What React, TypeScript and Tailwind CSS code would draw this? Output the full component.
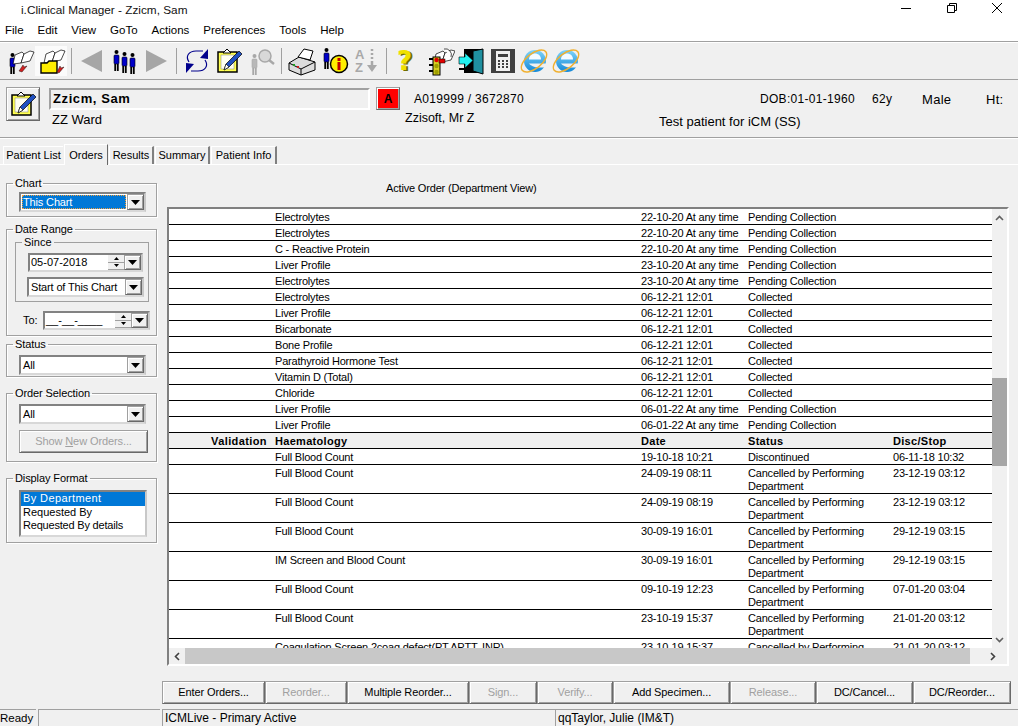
import type { ReactNode } from "react";

const raised =
  "border border-[#a0a0a0] border-r-[#696969] border-b-[#696969] shadow-[inset_1px_1px_0_#ffffff,inset_-1px_-1px_0_#a0a0a0]";
const sunken = "border-2 border-[#828282] border-r-[#c8c8c8] border-b-[#d8d8d8]";

const pendingRows = [
  ["Electrolytes", "22-10-20 At any time", "Pending Collection"],
  ["Electrolytes", "22-10-20 At any time", "Pending Collection"],
  ["C - Reactive Protein", "22-10-20 At any time", "Pending Collection"],
  ["Liver Profile", "23-10-20 At any time", "Pending Collection"],
  ["Electrolytes", "23-10-20 At any time", "Pending Collection"],
  ["Electrolytes", "06-12-21 12:01", "Collected"],
  ["Liver Profile", "06-12-21 12:01", "Collected"],
  ["Bicarbonate", "06-12-21 12:01", "Collected"],
  ["Bone Profile", "06-12-21 12:01", "Collected"],
  ["Parathyroid Hormone Test", "06-12-21 12:01", "Collected"],
  ["Vitamin D (Total)", "06-12-21 12:01", "Collected"],
  ["Chloride", "06-12-21 12:01", "Collected"],
  ["Liver Profile", "06-01-22 At any time", "Pending Collection"],
  ["Liver Profile", "06-01-22 At any time", "Pending Collection"],
];

const cancelled = "Cancelled by Performing Department";
const haemRows = [
  ["Full Blood Count", "19-10-18 10:21", "Discontinued", "06-11-18 10:32"],
  ["Full Blood Count", "24-09-19 08:11", cancelled, "23-12-19 03:12"],
  ["Full Blood Count", "24-09-19 08:19", cancelled, "23-12-19 03:12"],
  ["Full Blood Count", "30-09-19 16:01", cancelled, "29-12-19 03:15"],
  ["IM Screen and Blood Count", "30-09-19 16:01", cancelled, "29-12-19 03:15"],
  ["Full Blood Count", "09-10-19 12:23", cancelled, "07-01-20 03:04"],
  ["Full Blood Count", "23-10-19 15:37", cancelled, "21-01-20 03:12"],
  ["Coagulation Screen 2coag defect(PT,APTT, INR)", "23-10-19 15:37", cancelled, "21-01-20 03:12"],
];

const actions = [
  { label: "Enter Orders...", w: "w-[103px]" },
  { label: "Reorder...", w: "w-[82px]", off: true },
  { label: "Multiple Reorder...", w: "w-[122px]" },
  { label: "Sign...", w: "w-[68px]", off: true },
  { label: "Verify...", w: "w-[76px]", off: true },
  { label: "Add Specimen...", w: "w-[117px]" },
  { label: "Release...", w: "w-[86px]", off: true },
  { label: "DC/Cancel...", w: "w-[97px]" },
  { label: "DC/Reorder...", w: "w-[98px]" },
];

const Person = ({ x, y, c = "#0000c8", s = "#000" }: { x: number; y: number; c?: string; s?: string }) => (
  <g>
    <circle cx={x + 2.5} cy={y + 2} r="2" fill={s} />
    <rect x={x} y={y + 5} width="5" height="9" rx="1" fill={c} stroke={s} strokeWidth="0.6" />
    <rect x={x + 0.3} y={y + 14} width="1.8" height="7" fill={s} />
    <rect x={x + 2.9} y={y + 14} width="1.8" height="7" fill={s} />
  </g>
);

const Book = ({ x, y, s = "#000" }: { x: number; y: number; s?: string }) => (
  <g fill="#fff" stroke={s} strokeWidth="0.7">
    <path d={`M${x} ${y + 4}l7-3 2 2 -3 9 -8 1z`} />
    <path d={`M${x + 9} ${y + 3}l6-3 4 1 -4 9 -9 2z`} />
  </g>
);

const Icon = ({ children, w = 32, h = 32 }: { children: ReactNode; w?: number; h?: number }) => (
  <svg width={w} height={h} viewBox={`0 0 ${w} ${h}`}>{children}</svg>
);

const ClipboardIcon = () => (
  <Icon>
    <rect x="5" y="7" width="19" height="20" fill="#ffff50" stroke="#000" strokeWidth="1.5" />
    <rect x="8" y="10" width="13" height="14" fill="#fffff0" stroke="#808080" strokeWidth="0.5" />
    <path d="M10 8l4-4 4 4z" fill="#fff" stroke="#000" />
    <path d="M11 25l2-6 13-13 3 3-13 13z" fill="#2050c0" stroke="#000" strokeWidth="0.7" />
    <path d="M13 19l3 3-5 3z" fill="#fff" stroke="#000" strokeWidth="0.6" />
  </Icon>
);

const IeIcon = () => (
  <Icon>
    <defs>
      <linearGradient id="ieBlue" x1="0" y1="0" x2="0" y2="1">
        <stop offset="0" stopColor="#7fd4f8" />
        <stop offset="1" stopColor="#1488d8" />
      </linearGradient>
    </defs>
    <circle cx="16" cy="16" r="11" fill="url(#ieBlue)" />
    <path d="M10 14.5c0-8 12-8 12 0z" fill="#f4fbff" />
    <path d="M10 18.5h19v4h-8c-4 0-8-.5-11-4z" fill="#f0f0f0" />
    <ellipse cx="15" cy="16" rx="15" ry="7.5" fill="none" stroke="#f0b030" strokeWidth="1.4" transform="rotate(-38 15 16)" />
  </Icon>
);

const toolbar: (ReactNode | "sep")[] = [
  <Icon key="a">
    <Person x={7} y={8} />
    <Book x={12} y={6} />
    <path d="M16 26l4-6 1 2 3-1-5 6z" fill="#d02020" stroke="#000" strokeWidth="0.4" />
  </Icon>,
  <Icon key="b">
    <Book x={11} y={5} />
    <path d="M6 18h6l2-2h8v12H6z" fill="#ffee00" stroke="#000" strokeWidth="1.4" />
    <path d="M22 27l3-6 1 2 3-1-5 6z" fill="#d02020" stroke="#000" strokeWidth="0.4" />
  </Icon>,
  "sep",
  <Icon key="c"><path d="M5 16L26 5v22z" fill="#a6a6a6" /></Icon>,
  <Icon key="d">
    <Person x={6} y={5} />
    <Person x={14} y={7} />
    <Person x={22} y={8} />
  </Icon>,
  <Icon key="e"><path d="M27 16L6 5v22z" fill="#a6a6a6" /></Icon>,
  "sep",
  <Icon key="f">
    <path d="M8 17c-4-6 0-11 7-11h7" fill="none" stroke="#00008c" strokeWidth="1.2" />
    <path d="M24 15c4 6 0 11-7 11h-7" fill="none" stroke="#00008c" strokeWidth="1.2" />
    <path d="M27 4v10l-8-1z" fill="#00008c" />
    <path d="M5 28V18l8 1z" fill="#00008c" />
  </Icon>,
  <ClipboardIcon key="g" />,
  <Icon key="h">
    <Person x={7} y={9} c="#b8b8b8" s="#a8a8a8" />
    <circle cx="20" cy="11" r="6" fill="#d8d8d8" stroke="#a8a8a8" strokeWidth="1.5" />
    <path d="M24 15l5 4" stroke="#a8a8a8" strokeWidth="2.5" />
  </Icon>,
  "sep",
  <Icon key="i">
    <path d="M3 18l10-6 16 5v8l-14 5-12-5z" fill="#dcdcdc" stroke="#000" />
    <path d="M3 18l12 6 14-7M15 24v6" fill="none" stroke="#000" />
    <path d="M12 12l6-8 9 2-3 9z" fill="#fff" stroke="#000" />
    <rect x="7" y="19" width="2" height="2" fill="#20a020" />
    <rect x="11" y="21" width="2" height="2" fill="#d02020" />
  </Icon>,
  <Icon key="j">
    <Person x={6} y={3} />
    <circle cx="21" cy="19" r="8.5" fill="#ffee00" stroke="#000" strokeWidth="1.5" />
    <rect x="19.5" y="13" width="3" height="3" fill="#c00000" />
    <rect x="19.5" y="17" width="3" height="8" fill="#c00000" />
  </Icon>,
  <Icon key="k">
    <text x="5" y="14" fontSize="13" fontWeight="700" fill="#a8a8a8" fontFamily="Liberation Sans">A</text>
    <text x="5" y="27" fontSize="13" fontWeight="700" fill="#a8a8a8" fontFamily="Liberation Sans">Z</text>
    <path d="M22 4v2M22 8v2M22 12v2M22 16v6" stroke="#a8a8a8" strokeWidth="2.5" />
    <path d="M17 20h10l-5 7z" fill="#a8a8a8" />
  </Icon>,
  "sep",
  <Icon key="l">
    <text x="8" y="25.5" fontSize="26" fontWeight="700" fill="#707000" fontFamily="DejaVu Sans">?</text>
    <text x="6" y="24.5" fontSize="26" fontWeight="700" fill="#f0e000" fontFamily="DejaVu Sans">?</text>
  </Icon>,
  <Icon key="m">
    <Book x={13} y={5} />
    <path d="M21 4a6 6 0 0 1 7 8" fill="#fff" stroke="#000" strokeWidth="0.7" />
    <rect x="10" y="12" width="7" height="18" fill="#d8d020" stroke="#000" />
    <circle cx="13.5" cy="15" r="2.2" fill="#e00000" />
    <circle cx="13.5" cy="21" r="2.2" fill="#a0a000" />
    <circle cx="13.5" cy="27" r="2.2" fill="#a0a000" />
    <rect x="6" y="13" width="4" height="2" fill="#000" />
    <rect x="6" y="19" width="4" height="2" fill="#000" />
    <rect x="6" y="25" width="4" height="2" fill="#000" />
    <rect x="16" y="14" width="6" height="4" fill="#e00000" stroke="#000" strokeWidth="0.5" />
  </Icon>,
  <Icon key="n">
    <path d="M9 4h19v24H9z" fill="#000" />
    <path d="M18 6l10-2v25l-10-3z" fill="#2090a0" stroke="#000" />
    <rect x="4" y="23" width="12" height="2" fill="#000" />
    <path d="M4 12h6V8l8 7.5-8 7.5v-4H4z" fill="#20f0f0" stroke="#000" strokeWidth="0.6" />
  </Icon>,
  <Icon key="o">
    <rect x="4" y="4" width="24" height="24" fill="#404040" />
    <rect x="9" y="6" width="14" height="20" fill="#f0f0f0" />
    <rect x="11" y="9" width="10" height="3" fill="#404040" />
    {[11, 15, 19].map((x) =>
      [15, 18, 21].map((y) => <rect key={`${x}${y}`} x={x} y={y} width="2" height="2" fill="#404040" />)
    )}
  </Icon>,
  <IeIcon key="p" />,
  <IeIcon key="q" />,
];

const Arrow = () => (
  <svg width="9" height="5" viewBox="0 0 9 5"><path d="M0 0h9L4.5 5z" fill="#000" /></svg>
);

const Drop = () => (
  <div className={`flex w-[17px] shrink-0 items-center justify-center self-stretch bg-[#f0f0f0] ${raised}`}>
    <Arrow />
  </div>
);

const Combo = ({ value, className, selected }: { value: string; className: string; selected?: boolean }) => (
  <div className={`flex bg-white text-[11px] tracking-[-0.15px] ${sunken} ${className}`}>
    <div className="min-w-0 flex-1 p-px">
      <div
        className={
          selected
            ? "h-full whitespace-nowrap border border-dotted border-[#f0a040] bg-[#0078d7] leading-[13px] text-white"
            : "whitespace-nowrap pl-[1px] leading-[14px]"
        }
      >
        {value}
      </div>
    </div>
    <Drop />
  </div>
);

const Spin = () => (
  <div className="flex w-[16px] shrink-0 flex-col">
    <div className="flex h-1/2 items-center justify-center border-b border-[#a0a0a0] bg-[#f0f0f0]">
      <svg width="5" height="3" viewBox="0 0 5 3"><path d="M0 3h5L2.5 0z" fill="#000" /></svg>
    </div>
    <div className="flex h-1/2 items-center justify-center border-b border-[#a0a0a0] bg-[#f0f0f0]">
      <svg width="5" height="3" viewBox="0 0 5 3"><path d="M0 0h5L2.5 3z" fill="#000" /></svg>
    </div>
  </div>
);

const Group = ({ title, className, children }: { title: string; className: string; children: ReactNode }) => (
  <fieldset className={`w-[151px] border border-[#a0a0a0] shadow-[inset_1px_1px_0_#ffffff,1px_1px_0_#ffffff] ${className}`}>
    <legend className="ml-[6px] px-[2px] text-[11px] leading-[12px] tracking-[-0.1px]">{title}</legend>
    {children}
  </fieldset>
);

const Tab = ({ label, active, plain, w }: { label: string; active?: boolean; plain?: boolean; w: string }) => (
  <div
    className={
      active
        ? `${w} z-10 -mb-px flex h-[21px] items-start justify-center border border-b-0 border-white border-r-[#696969] bg-[#f0f0f0] pt-[2px]`
        : `${w} flex h-[18px] items-center justify-center border-t border-l border-white bg-[#f0f0f0] ${plain ? "" : "border-r-2 border-r-[#808080]"}`
    }
  >
    {label}
  </div>
);

const Cell = ({ children, bold }: { children?: ReactNode; bold?: boolean }) => (
  <div className={bold ? "font-bold tracking-[0.3px]" : ""}>{children}</div>
);

const rowClass =
  "grid grid-cols-[106px_366px_107px_145px_1fr] border-b border-black pt-[2px] text-[11px] leading-[13px] tracking-[-0.2px] text-black";

export default function App() {
  return (
    <div
      className="flex h-[726px] w-[1018px] flex-col overflow-hidden bg-[#f0f0f0] text-[12px] text-black"
      style={{ fontFamily: '"Liberation Sans", Arial, sans-serif' }}
    >
      {/* title and menu */}
      <div className="h-[41px] shrink-0 bg-white">
        <div className="flex h-[21px] items-start pl-[21px]">
          <span className="mt-[3px] flex-1 text-[11.8px] leading-[14px] text-[#111]">i.Clinical Manager - Zzicm, Sam</span>
          <svg width="104" height="16" viewBox="0 0 104 16" className="mr-[14px]" fill="none" stroke="#000">
            <path d="M1 8.5h10" />
            <path d="M47.5 5.5h7v7h-7zM49.5 5.5v-2h7v7h-2" />
            <path d="M92 3l10 10M102 3l-10 10" />
          </svg>
        </div>
        <div className="flex h-[20px] items-center gap-[14px] pl-[5px] text-[11.5px]">
          {["File", "Edit", "View", "GoTo", "Actions", "Preferences", "Tools", "Help"].map((m) => (
            <span key={m}>{m}</span>
          ))}
        </div>
      </div>

      {/* toolbar */}
      <div className="flex h-[39px] shrink-0 items-center border-y border-y-[#a0a0a0] pl-[3px] shadow-[inset_0_1px_0_#ffffff]">
        {toolbar.map((t, i) =>
          t === "sep" ? (
            <div key={i} className="mx-[4px] h-[26px] w-[1px] bg-[#a0a0a0]" />
          ) : (
            <div
              key={i}
              className={
                i === 1
                  ? "flex h-[30px] w-[32px] items-center justify-center bg-white/70"
                  : "flex h-[30px] w-[32px] items-center justify-center"
              }
            >
              {t}
            </div>
          )
        )}
      </div>

      {/* patient banner */}
      <div className="flex h-[58px] shrink-0 items-start border-b border-[#a0a0a0] pl-[6px] pt-[7px]">
        <div className={`flex h-[34px] w-[34px] shrink-0 items-center justify-center ${raised}`}>
          <ClipboardIcon />
        </div>
        <div className="ml-[9px] flex-1">
          <div className="flex h-[23px] items-center">
            <div className="flex h-[22px] w-[321px] items-center border-2 border-[#a0a0a0] border-r-white border-b-white pl-[2px] text-[13px] font-bold tracking-[0.6px]">
              Zzicm, Sam
            </div>
            <div className={`ml-[6px] flex h-[23px] w-[24px] items-center justify-center bg-[#ff0000] font-bold ${raised}`}>
              A
            </div>
            <div className="ml-[14px] w-[346px] tracking-[0.3px]">A019999 / 3672870</div>
            <div className="flex pt-[2px] tracking-[0.3px]">
              <span className="w-[112px]">DOB:01-01-1960</span>
              <span className="w-[50px]">62y</span>
              <span className="w-[64px] text-[13px]">Male</span>
              <span className="text-[13px]">Ht:</span>
            </div>
          </div>
          <div className="flex items-start pt-[1px]">
            <span className="w-[356px] pl-[3px] pt-[1px] text-[13px] leading-[15px]">ZZ Ward</span>
            <span className="w-[254px] text-[12.5px] leading-[15px]">Zzisoft, Mr Z</span>
            <span className="pt-[3px] text-[13px] leading-[15px]">Test patient for iCM (SS)</span>
          </div>
        </div>
      </div>

      {/* tabs */}
      <div className="flex h-[27px] shrink-0 items-end gap-px border-b border-white pl-[3px] text-[11px] shadow-[inset_0_1px_0_#ffffff]">
        <Tab label="Patient List" w="w-[60px]" plain />
        <Tab label="Orders" w="w-[44px]" active />
        <Tab label="Results" w="w-[45px]" />
        <Tab label="Summary" w="w-[55px]" />
        <Tab label="Patient Info" w="w-[66px]" />
      </div>

      {/* main */}
      <div className="flex min-h-0 flex-1">
        <div className="flex w-[167px] shrink-0 flex-col pl-[6px] pt-[12px] text-[11px]">
          <Group title="Chart" className="h-[40px]">
            <div className="pl-[12px] pt-[3px]">
              <Combo value="This Chart" selected className="h-[20px] w-[127px]" />
            </div>
          </Group>
          <Group title="Date Range" className="mt-[6px] h-[113px]">
            <div className="pl-[8px] pt-[1px]">
              <fieldset className="h-[66px] w-[134px] border border-[#a0a0a0]">
                <legend className="ml-[6px] px-[2px] leading-[12px]">Since</legend>
                <div className="pl-[12px] pt-[5px]">
                  <div className={`flex h-[19px] w-[115px] bg-white ${sunken}`}>
                    <div className="flex-1 pl-[1px] leading-[15px]">05-07-2018</div>
                    <Spin />
                    <Drop />
                  </div>
                  <Combo value="Start of This Chart" className="ml-[-1px] mt-[5px] h-[20px] w-[117px]" />
                </div>
              </fieldset>
              <div className="mt-[9px] flex items-center">
                <span className="w-[28px] pl-[8px]">To:</span>
                <div className={`flex h-[19px] w-[107px] bg-white ${sunken}`}>
                  <div className="flex-1 pl-[1px] leading-[15px]">__-__-____</div>
                  <Spin />
                  <Drop />
                </div>
              </div>
            </div>
          </Group>
          <Group title="Status" className="mt-[2px] h-[39px]">
            <div className="pl-[12px] pt-[5px]">
              <Combo value="All" className="h-[20px] w-[127px]" />
            </div>
          </Group>
          <Group title="Order Selection" className="mt-[10px] h-[75px]">
            <div className="pl-[12px] pt-[5px]">
              <Combo value="All" className="h-[20px] w-[127px]" />
              <div className={`mt-[6px] flex h-[23px] w-[129px] items-center justify-center tracking-[-0.1px] text-[#a0a0a0] ${raised}`}>
                <span>Show <span className="underline">N</span>ew Orders...</span>
              </div>
            </div>
          </Group>
          <Group title="Display Format" className="mt-[10px] h-[71px]">
            <div className="pl-[12px] pt-[6px]">
              <div className={`h-[47px] w-[128px] bg-white leading-[13px] ${sunken}`}>
                <div className="h-[14px] bg-[#0078d7] pl-[2px] tracking-[0.4px] text-white">By Department</div>
                <div className="pl-[2px]">Requested By</div>
                <div className="pl-[2px] tracking-[-0.2px]">Requested By details</div>
              </div>
            </div>
          </Group>
        </div>

        <div className="flex min-w-0 flex-1 flex-col">
          <div className="h-[42px] shrink-0 pl-[219px] pt-[17px] text-[11px] leading-[13px] tracking-[-0.17px]">
            Active Order (Department View)
          </div>
          <div className="flex h-[459px] w-[842px] shrink-0 flex-col border-2 border-[#808080] border-r-white border-b-white">
            <div className="flex min-h-0 flex-1">
              <div className="min-w-0 flex-1 overflow-hidden bg-white">
                {pendingRows.map((r, i) => (
                  <div key={i} className={rowClass}>
                    <div />
                    <Cell>{r[0]}</Cell>
                    <Cell>{r[1]}</Cell>
                    <Cell>{r[2]}</Cell>
                    <div />
                  </div>
                ))}
                <div className={`${rowClass} bg-[#f0f0f0]`}>
                  <div className="pr-[8px] text-right font-bold tracking-[0.4px]">Validation</div>
                  <Cell bold>Haematology</Cell>
                  <Cell bold>Date</Cell>
                  <Cell bold>Status</Cell>
                  <Cell bold>Disc/Stop</Cell>
                </div>
                {haemRows.map((r, i) => (
                  <div key={i} className={rowClass}>
                    <div />
                    <Cell>{r[0]}</Cell>
                    <Cell>{r[1]}</Cell>
                    <div className="w-[125px]">{r[2]}</div>
                    <Cell>{r[3]}</Cell>
                  </div>
                ))}
              </div>
              <div className="flex w-[15px] shrink-0 flex-col bg-[#f0f0f0]">
                <div className="flex h-[17px] items-center justify-center">
                  <svg width="9" height="6" viewBox="0 0 9 6" fill="none" stroke="#606060" strokeWidth="1.6"><path d="M1 5l3.5-3.5L8 5" /></svg>
                </div>
                <div className="mt-[152px] h-[88px] bg-[#a6a6a6]" />
                <div className="flex-1" />
                <div className="flex h-[17px] items-center justify-center">
                  <svg width="9" height="6" viewBox="0 0 9 6" fill="none" stroke="#606060" strokeWidth="1.6"><path d="M1 1l3.5 3.5L8 1" /></svg>
                </div>
              </div>
            </div>
            <div className="flex h-[16px] shrink-0 bg-[#f0f0f0]">
              <div className="flex w-[16px] items-center justify-center">
                <svg width="6" height="9" viewBox="0 0 6 9" fill="none" stroke="#404040" strokeWidth="1.6"><path d="M5 1L1.5 4.5 5 8" /></svg>
              </div>
              <div className="w-[785px] bg-[#c8c8c8]" />
              <div className="flex flex-1 items-center justify-center pl-[8px]">
                <svg width="6" height="9" viewBox="0 0 6 9" fill="none" stroke="#404040" strokeWidth="1.6"><path d="M1 1l3.5 3.5L1 8" /></svg>
              </div>
            </div>
          </div>
          <div className="ml-[-5px] mt-[15px] flex h-[23px] shrink-0">
            {actions.map((a) => (
              <div
                key={a.label}
                className={`${a.w} flex items-center justify-center text-[11px] tracking-[-0.1px] ${raised} ${a.off ? "text-[#a0a0a0]" : ""}`}
              >
                {a.label}
              </div>
            ))}
          </div>
        </div>
      </div>

      {/* status bar */}
      <div className="flex h-[17px] shrink-0 text-[12px] leading-[16px]">
        <div className="w-[36px] border-t border-[#a0a0a0] text-[11.5px]">Ready</div>
        <div className="ml-[2px] w-[122px] border-t border-l border-[#a0a0a0]" />
        <div className="ml-[2px] w-[393px] border-t border-l border-[#a0a0a0] pl-[2px]">ICMLive - Primary Active</div>
        <div className="flex-1 border-t border-l border-[#a0a0a0] pl-[2px]">qqTaylor, Julie (IM&amp;T)</div>
      </div>
    </div>
  );
}
